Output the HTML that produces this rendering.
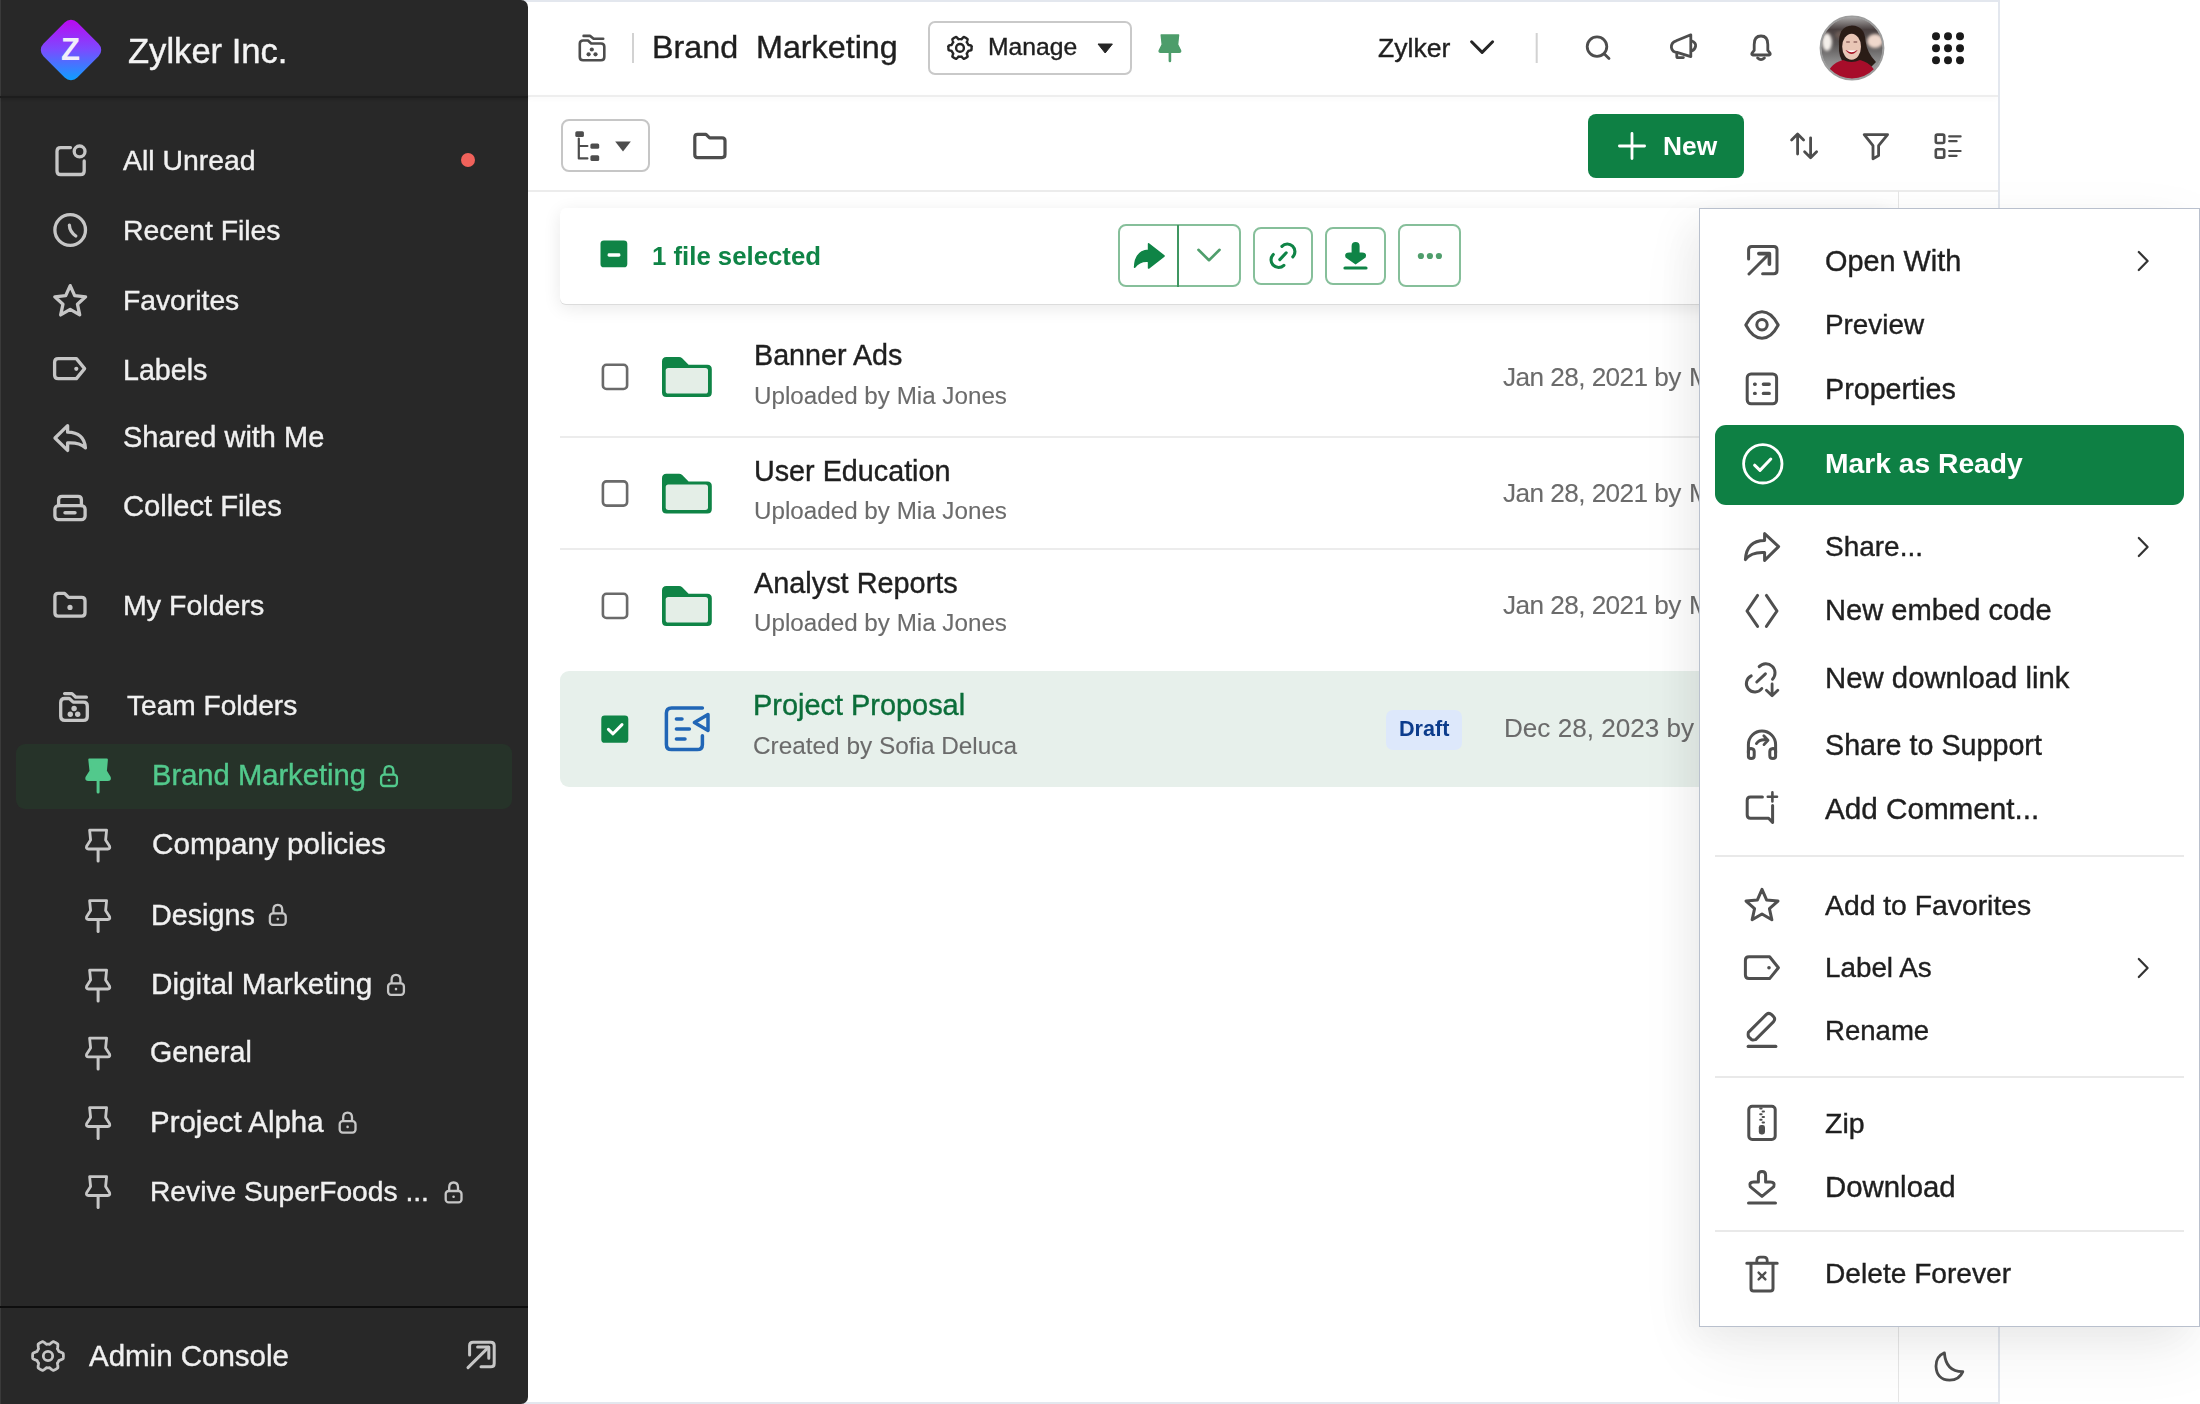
<!DOCTYPE html>
<html><head><meta charset="utf-8"><title>Brand Marketing</title>
<style>
html,body{margin:0;padding:0;width:2200px;height:1404px;overflow:hidden;background:#fff;}
body{position:relative;font-family:"Liberation Sans",sans-serif;}
.t{position:absolute;white-space:pre;line-height:0;will-change:transform;font-family:"Liberation Sans",sans-serif;z-index:6;}
.t.m{z-index:12;}
.abs{position:absolute;}
svg.layer{position:absolute;left:0;top:0;width:2200px;height:1404px;overflow:visible;}
</style></head>
<body>
<!-- outer frame -->
<div class="abs" style="left:0;top:0;width:2000px;height:1404px;background:#e3e7ee;"></div>
<div class="abs" style="left:2px;top:2px;width:1996px;height:1400px;background:#ffffff;"></div>
<!-- sidebar -->
<div class="abs" style="left:0;top:0;width:528px;height:1404px;background:#282828;border-radius:0 7px 7px 0;z-index:2;box-shadow:inset 1px 0 0 #3a3a3a;"></div>
<div class="abs" style="left:0;top:96px;width:528px;height:2px;background:#1d1d1d;z-index:3;box-shadow:0 1px 3px rgba(0,0,0,0.25);"></div>
<div class="abs" style="left:0;top:1305.5px;width:528px;height:2px;background:#0e0e0e;z-index:3;"></div>
<div class="abs" style="left:16px;top:744px;width:496px;height:64.5px;background:#263329;border-radius:9px;z-index:3;"></div>
<div class="abs" style="left:461px;top:153px;width:14px;height:14px;background:#f0625b;border-radius:50%;z-index:4;"></div>
<!-- logo -->
<div class="abs" style="left:46.5px;top:25.5px;width:48px;height:48px;border-radius:9px;transform:rotate(45deg);background:linear-gradient(135deg,#c400f0 0%,#7a4cff 50%,#00aaff 100%);z-index:4;"></div>
<div class="abs" style="left:53px;top:28.5px;width:35px;text-align:center;font:700 31px/42px 'Liberation Sans',sans-serif;color:#f1effa;z-index:5;">Z</div>
<!-- header / toolbar lines -->
<div class="abs" style="left:528px;top:95px;width:1470px;height:2px;background:#eeeeee;box-shadow:0 2px 4px rgba(0,0,0,0.04);z-index:1;"></div>
<div class="abs" style="left:528px;top:189.5px;width:1470px;height:2px;background:#ececec;z-index:1;"></div>
<div class="abs" style="left:1898px;top:191px;width:1px;height:1211px;background:#e6e6e6;z-index:1;"></div>
<!-- manage button -->
<div class="abs" style="left:928px;top:20.5px;width:199.5px;height:50.5px;border:2px solid #c9c9c9;border-radius:7px;z-index:1;"></div>
<!-- tree button -->
<div class="abs" style="left:560.5px;top:119.3px;width:85px;height:49px;border:2px solid #c6c6c6;border-radius:8px;z-index:1;"></div>
<!-- New button -->
<div class="abs" style="left:1588px;top:114px;width:156px;height:64px;background:#0e8044;border-radius:8px;z-index:1;"></div>
<!-- selection card -->
<div class="abs" style="left:560px;top:208px;width:1330px;height:96px;background:#fff;border-radius:6px;box-shadow:0 1px 0 #dcdcdc,0 4px 18px rgba(0,0,0,0.09);z-index:2;"></div>
<div class="abs" style="left:1118.2px;top:224.3px;width:118.4px;height:59px;border:2px solid #86bf9a;border-radius:8px;z-index:3;"></div>
<div class="abs" style="left:1177px;top:225px;width:2px;height:62px;background:#3f9661;z-index:3;"></div>
<div class="abs" style="left:1253.3px;top:226.5px;width:55.3px;height:54.9px;border:2px solid #86bf9a;border-radius:8px;z-index:3;"></div>
<div class="abs" style="left:1325.4px;top:226.5px;width:56.3px;height:54.9px;border:2px solid #86bf9a;border-radius:8px;z-index:3;"></div>
<div class="abs" style="left:1398.3px;top:224.3px;width:59.2px;height:59px;border:2px solid #86bf9a;border-radius:8px;z-index:3;"></div>
<!-- rows -->
<div class="abs" style="left:560px;top:436px;width:1340px;height:2px;background:#ececec;z-index:1;"></div>
<div class="abs" style="left:560px;top:548px;width:1340px;height:2px;background:#ececec;z-index:1;"></div>
<div class="abs" style="left:560px;top:671px;width:1340px;height:116px;background:#e7f0eb;border-radius:9px;z-index:1;"></div>
<div class="abs" style="left:1386.2px;top:710px;width:75.8px;height:39.5px;background:#dde8fb;border-radius:7px;z-index:2;"></div>
<svg style="position:absolute;left:1819px;top:15px;z-index:6" width="66" height="66" viewBox="0 0 66 66">
<defs><clipPath id="av"><circle cx="33" cy="33" r="31"/></clipPath>
<filter id="bl" x="-20%" y="-20%" width="140%" height="140%"><feGaussianBlur stdDeviation="1.6"/></filter>
<filter id="bl2" x="-20%" y="-20%" width="140%" height="140%"><feGaussianBlur stdDeviation="0.6"/></filter>
<linearGradient id="avbg" x1="0" y1="0" x2="0" y2="1"><stop offset="0" stop-color="#b8b8b8"/><stop offset="0.22" stop-color="#4a4040"/><stop offset="0.45" stop-color="#5a5656"/><stop offset="0.7" stop-color="#8c8c8c"/><stop offset="1" stop-color="#b0b0b0"/></linearGradient></defs>
<g clip-path="url(#av)">
<rect width="66" height="66" fill="url(#avbg)"/>
<g filter="url(#bl)">
<ellipse cx="8" cy="27" rx="5" ry="9" fill="#f4efea"/>
<ellipse cx="56" cy="26" rx="8" ry="7" fill="#f0d8cc"/>
<ellipse cx="22" cy="20" rx="6" ry="4" fill="#6a5a54"/>
</g>
<g filter="url(#bl2)">
<path d="M20,30 Q19,11 33,10.5 Q46,11 46.5,26 Q48,38 57,47 L52,52 L40,50 L26,50 Q19,42 20,30 Z" fill="#2a1c18"/>
<ellipse cx="32.6" cy="31.8" rx="9.4" ry="13" fill="#e9c6b6"/>
<path d="M26.5,35 Q32.6,43 38.7,35 Q32.6,37.6 26.5,35 Z" fill="#a81828"/>
<path d="M27.6,35.6 Q32.6,38.8 37.6,35.6 Z" fill="#ffffff"/>
<path d="M27.2,27 H30.8 M34.6,27 H38.2" stroke="#6a3a3a" stroke-width="1.1"/>
<path d="M6,66 Q9,49 24,45 Q32.6,49 41,45 Q56,49 60,66 Z" fill="#a70f2b"/>
</g>
</g>
<circle cx="33" cy="33" r="31.4" fill="none" stroke="#9d9d9d" stroke-width="2"/>
</svg>
<svg class="layer" style="z-index:5" viewBox="0 0 2200 1404"><g fill="none" stroke="#c6c6c6" stroke-width="3.3" stroke-linecap="round" stroke-linejoin="round"><path d="M70.5,147.6 H60.6 Q57,147.6 57,151.2 V170.9 Q57,174.5 60.6,174.5 H80.6 Q84.2,174.5 84.2,170.9 V161"/><circle cx="79.6" cy="151.4" r="5.4"/><circle cx="70.2" cy="230" r="15.3"/><path d="M69.4,225.2 Q69.6,231.5 75.8,236"/><path d="M70.20,285.60 L74.67,295.65 L85.61,296.79 L77.43,304.15 L79.72,314.91 L70.20,309.40 L60.68,314.91 L62.97,304.15 L54.79,296.79 L65.73,295.65 Z"/><path d="M58.2,358.6 H76.4 L84.6,368.6 L76.4,378.6 H58.2 Q54.6,378.6 54.6,375 V362.2 Q54.6,358.6 58.2,358.6 Z"/><circle cx="76.3" cy="368.8" r="2.1" fill="#c6c6c6" stroke="none"/><path d="M67.6,425.6 L55,438 L67.6,450.4 V443 Q79,442.2 85.4,447.8 Q84,432.4 67.6,432.2 Z"/><rect x="54.9" y="505.6" width="30.2" height="14" rx="3.6"/><path d="M58.6,505.6 V499.8 Q58.6,496.4 62,496.4 H78 Q81.4,496.4 81.4,499.8 V505.6"/><path d="M65,512.8 H75" stroke-width="3.4"/><path d="M54.9,596.6 Q54.9,593.4 58.1,593.4 H64.6 L68.6,597.4 H81.7 Q85,597.4 85,600.7 V612.8 Q85,616.1 81.7,616.1 H58.1 Q54.9,616.1 54.9,612.8 Z"/><circle cx="70" cy="607.4" r="2.6" fill="#c6c6c6" stroke="none"/><path d="M60.7,702.6 Q60.7,698.5 64.8,698.5 H69.4 L73.2,702.1 H83.4 Q87.3,702.1 87.3,706 V716.4 Q87.3,720.3 83.4,720.3 H64.8 Q60.7,720.3 60.7,716.2 Z"/><path d="M64.6,693.6 H72 L75.8,697.2 H86.4"/></g><g fill="#c6c6c6"><circle cx="74.1" cy="708.5" r="2.7"/><circle cx="70.3" cy="714.3" r="2.7"/><circle cx="77.7" cy="714.3" r="2.7"/></g><path d="M89.4,759.7 H106.8 L105.8,771.0 L109.6,777.3 Q110.4,780.0 107.8,780.0 H88.4 Q85.8,780.0 86.6,777.3 L90.6,771.0 Z" fill="#52c98c" stroke="#52c98c" stroke-width="2.2" stroke-linejoin="round"/><path d="M98.1,780.5 V792.0" stroke="#52c98c" stroke-width="3" stroke-linecap="round"/><path d="M89.6,830.2 H106.6 L105.6,840.0 L109.6,846.3 Q110.4,849.0 107.8,849.0 H88.4 Q85.8,849.0 86.6,846.3 L90.6,840.0 Z" fill="none" stroke="#c6c6c6" stroke-width="2.8" stroke-linejoin="round"/><path d="M98.1,849.5 V861.0" stroke="#c6c6c6" stroke-width="3" stroke-linecap="round"/><path d="M89.6,900.7 H106.6 L105.6,910.5 L109.6,916.8 Q110.4,919.5 107.8,919.5 H88.4 Q85.8,919.5 86.6,916.8 L90.6,910.5 Z" fill="none" stroke="#c6c6c6" stroke-width="2.8" stroke-linejoin="round"/><path d="M98.1,920 V931.5" stroke="#c6c6c6" stroke-width="3" stroke-linecap="round"/><path d="M89.6,970.2 H106.6 L105.6,980.0 L109.6,986.3 Q110.4,989.0 107.8,989.0 H88.4 Q85.8,989.0 86.6,986.3 L90.6,980.0 Z" fill="none" stroke="#c6c6c6" stroke-width="2.8" stroke-linejoin="round"/><path d="M98.1,989.5 V1001.0" stroke="#c6c6c6" stroke-width="3" stroke-linecap="round"/><path d="M89.6,1038.1000000000001 H106.6 L105.6,1047.9 L109.6,1054.2 Q110.4,1056.9 107.8,1056.9 H88.4 Q85.8,1056.9 86.6,1054.2 L90.6,1047.9 Z" fill="none" stroke="#c6c6c6" stroke-width="2.8" stroke-linejoin="round"/><path d="M98.1,1057.4 V1068.9" stroke="#c6c6c6" stroke-width="3" stroke-linecap="round"/><path d="M89.6,1107.7 H106.6 L105.6,1117.5 L109.6,1123.8 Q110.4,1126.5 107.8,1126.5 H88.4 Q85.8,1126.5 86.6,1123.8 L90.6,1117.5 Z" fill="none" stroke="#c6c6c6" stroke-width="2.8" stroke-linejoin="round"/><path d="M98.1,1127 V1138.5" stroke="#c6c6c6" stroke-width="3" stroke-linecap="round"/><path d="M89.6,1176.7 H106.6 L105.6,1186.5 L109.6,1192.8 Q110.4,1195.5 107.8,1195.5 H88.4 Q85.8,1195.5 86.6,1192.8 L90.6,1186.5 Z" fill="none" stroke="#c6c6c6" stroke-width="2.8" stroke-linejoin="round"/><path d="M98.1,1196 V1207.5" stroke="#c6c6c6" stroke-width="3" stroke-linecap="round"/><g fill="none" stroke="#52c98c" color="#52c98c" stroke-width="2.3"><rect x="381.1" y="774.6" width="15.8" height="11.4" rx="3"/><path d="M384.6,774.6 V771 Q384.6,766.1 389,766.1 Q393.4,766.1 393.4,771 V774.6"/><circle cx="389" cy="780.3" r="1.3" fill="currentColor" stroke="none"/></g><g fill="none" stroke="#c6c6c6" color="#c6c6c6" stroke-width="2.3"><rect x="269.90000000000003" y="913.4" width="15.8" height="11.4" rx="3"/><path d="M273.40000000000003,913.4 V909.8 Q273.40000000000003,904.9 277.8,904.9 Q282.2,904.9 282.2,909.8 V913.4"/><circle cx="277.8" cy="919.0999999999999" r="1.3" fill="currentColor" stroke="none"/></g><g fill="none" stroke="#c6c6c6" color="#c6c6c6" stroke-width="2.3"><rect x="388.1" y="983.4" width="15.8" height="11.4" rx="3"/><path d="M391.6,983.4 V979.8 Q391.6,974.9 396,974.9 Q400.4,974.9 400.4,979.8 V983.4"/><circle cx="396" cy="989.0999999999999" r="1.3" fill="currentColor" stroke="none"/></g><g fill="none" stroke="#c6c6c6" color="#c6c6c6" stroke-width="2.3"><rect x="339.70000000000005" y="1121.1999999999998" width="15.8" height="11.4" rx="3"/><path d="M343.20000000000005,1121.1999999999998 V1117.6 Q343.20000000000005,1112.6999999999998 347.6,1112.6999999999998 Q352.0,1112.6999999999998 352.0,1117.6 V1121.1999999999998"/><circle cx="347.6" cy="1126.8999999999999" r="1.3" fill="currentColor" stroke="none"/></g><g fill="none" stroke="#c6c6c6" color="#c6c6c6" stroke-width="2.3"><rect x="445.70000000000005" y="1191.0" width="15.8" height="11.4" rx="3"/><path d="M449.20000000000005,1191.0 V1187.4 Q449.20000000000005,1182.5 453.6,1182.5 Q458.0,1182.5 458.0,1187.4 V1191.0"/><circle cx="453.6" cy="1196.7" r="1.3" fill="currentColor" stroke="none"/></g><path d="M63.40,1356.00 L63.40,1356.24 L63.39,1356.48 L63.38,1356.73 L63.37,1356.97 L63.35,1357.21 L63.33,1357.45 L63.31,1357.69 L63.28,1357.93 L63.25,1358.17 L63.21,1358.41 L63.11,1358.64 L62.83,1358.83 L62.54,1359.01 L62.23,1359.18 L61.92,1359.34 L61.61,1359.49 L61.29,1359.64 L60.97,1359.77 L60.66,1359.89 L60.34,1360.01 L60.04,1360.12 L59.74,1360.23 L59.46,1360.33 L59.19,1360.43 L58.93,1360.53 L58.83,1360.69 L58.75,1360.86 L58.68,1361.02 L58.60,1361.19 L58.51,1361.36 L58.43,1361.52 L58.34,1361.68 L58.25,1361.85 L58.16,1362.01 L58.06,1362.17 L57.96,1362.32 L57.86,1362.48 L57.76,1362.63 L57.65,1362.79 L57.55,1362.94 L57.44,1363.08 L57.40,1363.29 L57.45,1363.57 L57.50,1363.86 L57.55,1364.16 L57.61,1364.47 L57.66,1364.79 L57.72,1365.13 L57.77,1365.46 L57.81,1365.81 L57.84,1366.16 L57.86,1366.50 L57.88,1366.85 L57.87,1367.20 L57.86,1367.54 L57.82,1367.87 L57.63,1368.02 L57.44,1368.17 L57.25,1368.32 L57.05,1368.46 L56.86,1368.60 L56.66,1368.74 L56.45,1368.87 L56.25,1369.00 L56.05,1369.13 L55.84,1369.26 L55.63,1369.38 L55.42,1369.50 L55.21,1369.61 L54.99,1369.72 L54.78,1369.83 L54.56,1369.93 L54.34,1370.04 L54.12,1370.13 L53.89,1370.23 L53.67,1370.32 L53.44,1370.41 L53.17,1370.36 L52.86,1370.20 L52.56,1370.04 L52.26,1369.86 L51.97,1369.67 L51.68,1369.47 L51.40,1369.26 L51.13,1369.05 L50.87,1368.84 L50.61,1368.63 L50.37,1368.42 L50.13,1368.22 L49.90,1368.03 L49.69,1367.85 L49.48,1367.71 L49.29,1367.73 L49.11,1367.75 L48.93,1367.76 L48.74,1367.78 L48.56,1367.79 L48.37,1367.79 L48.19,1367.80 L48.00,1367.80 L47.81,1367.80 L47.63,1367.79 L47.44,1367.79 L47.26,1367.78 L47.07,1367.76 L46.89,1367.75 L46.71,1367.73 L46.52,1367.71 L46.31,1367.85 L46.10,1368.03 L45.87,1368.22 L45.63,1368.42 L45.39,1368.63 L45.13,1368.84 L44.87,1369.05 L44.60,1369.26 L44.32,1369.47 L44.03,1369.67 L43.74,1369.86 L43.44,1370.04 L43.14,1370.20 L42.83,1370.36 L42.56,1370.41 L42.33,1370.32 L42.11,1370.23 L41.88,1370.13 L41.66,1370.04 L41.44,1369.93 L41.22,1369.83 L41.01,1369.72 L40.79,1369.61 L40.58,1369.50 L40.37,1369.38 L40.16,1369.26 L39.95,1369.13 L39.75,1369.00 L39.55,1368.87 L39.34,1368.74 L39.14,1368.60 L38.95,1368.46 L38.75,1368.32 L38.56,1368.17 L38.37,1368.02 L38.18,1367.87 L38.14,1367.54 L38.13,1367.20 L38.12,1366.85 L38.14,1366.50 L38.16,1366.16 L38.19,1365.81 L38.23,1365.46 L38.28,1365.13 L38.34,1364.79 L38.39,1364.47 L38.45,1364.16 L38.50,1363.86 L38.55,1363.57 L38.60,1363.29 L38.56,1363.08 L38.45,1362.94 L38.35,1362.79 L38.24,1362.63 L38.14,1362.48 L38.04,1362.32 L37.94,1362.17 L37.84,1362.01 L37.75,1361.85 L37.66,1361.68 L37.57,1361.52 L37.49,1361.36 L37.40,1361.19 L37.32,1361.02 L37.25,1360.86 L37.17,1360.69 L37.07,1360.53 L36.81,1360.43 L36.54,1360.33 L36.26,1360.23 L35.96,1360.12 L35.66,1360.01 L35.34,1359.89 L35.03,1359.77 L34.71,1359.64 L34.39,1359.49 L34.08,1359.34 L33.77,1359.18 L33.46,1359.01 L33.17,1358.83 L32.89,1358.64 L32.79,1358.41 L32.75,1358.17 L32.72,1357.93 L32.69,1357.69 L32.67,1357.45 L32.65,1357.21 L32.63,1356.97 L32.62,1356.73 L32.61,1356.48 L32.60,1356.24 L32.60,1356.00 L32.60,1355.76 L32.61,1355.52 L32.62,1355.27 L32.63,1355.03 L32.65,1354.79 L32.67,1354.55 L32.69,1354.31 L32.72,1354.07 L32.75,1353.83 L32.79,1353.59 L32.89,1353.36 L33.17,1353.17 L33.46,1352.99 L33.77,1352.82 L34.08,1352.66 L34.39,1352.51 L34.71,1352.36 L35.03,1352.23 L35.34,1352.11 L35.66,1351.99 L35.96,1351.88 L36.26,1351.77 L36.54,1351.67 L36.81,1351.57 L37.07,1351.47 L37.17,1351.31 L37.25,1351.14 L37.32,1350.98 L37.40,1350.81 L37.49,1350.64 L37.57,1350.48 L37.66,1350.32 L37.75,1350.15 L37.84,1349.99 L37.94,1349.83 L38.04,1349.68 L38.14,1349.52 L38.24,1349.37 L38.35,1349.21 L38.45,1349.06 L38.56,1348.92 L38.60,1348.71 L38.55,1348.43 L38.50,1348.14 L38.45,1347.84 L38.39,1347.53 L38.34,1347.21 L38.28,1346.87 L38.23,1346.54 L38.19,1346.19 L38.16,1345.84 L38.14,1345.50 L38.12,1345.15 L38.13,1344.80 L38.14,1344.46 L38.18,1344.13 L38.37,1343.98 L38.56,1343.83 L38.75,1343.68 L38.95,1343.54 L39.14,1343.40 L39.34,1343.26 L39.55,1343.13 L39.75,1343.00 L39.95,1342.87 L40.16,1342.74 L40.37,1342.62 L40.58,1342.50 L40.79,1342.39 L41.01,1342.28 L41.22,1342.17 L41.44,1342.07 L41.66,1341.96 L41.88,1341.87 L42.11,1341.77 L42.33,1341.68 L42.56,1341.59 L42.83,1341.64 L43.14,1341.80 L43.44,1341.96 L43.74,1342.14 L44.03,1342.33 L44.32,1342.53 L44.60,1342.74 L44.87,1342.95 L45.13,1343.16 L45.39,1343.37 L45.63,1343.58 L45.87,1343.78 L46.10,1343.97 L46.31,1344.15 L46.52,1344.29 L46.71,1344.27 L46.89,1344.25 L47.07,1344.24 L47.26,1344.22 L47.44,1344.21 L47.63,1344.21 L47.81,1344.20 L48.00,1344.20 L48.19,1344.20 L48.37,1344.21 L48.56,1344.21 L48.74,1344.22 L48.93,1344.24 L49.11,1344.25 L49.29,1344.27 L49.48,1344.29 L49.69,1344.15 L49.90,1343.97 L50.13,1343.78 L50.37,1343.58 L50.61,1343.37 L50.87,1343.16 L51.13,1342.95 L51.40,1342.74 L51.68,1342.53 L51.97,1342.33 L52.26,1342.14 L52.56,1341.96 L52.86,1341.80 L53.17,1341.64 L53.44,1341.59 L53.67,1341.68 L53.89,1341.77 L54.12,1341.87 L54.34,1341.96 L54.56,1342.07 L54.78,1342.17 L54.99,1342.28 L55.21,1342.39 L55.42,1342.50 L55.63,1342.62 L55.84,1342.74 L56.05,1342.87 L56.25,1343.00 L56.45,1343.13 L56.66,1343.26 L56.86,1343.40 L57.05,1343.54 L57.25,1343.68 L57.44,1343.83 L57.63,1343.98 L57.82,1344.13 L57.86,1344.46 L57.87,1344.80 L57.88,1345.15 L57.86,1345.50 L57.84,1345.84 L57.81,1346.19 L57.77,1346.54 L57.72,1346.87 L57.66,1347.21 L57.61,1347.53 L57.55,1347.84 L57.50,1348.14 L57.45,1348.43 L57.40,1348.71 L57.44,1348.92 L57.55,1349.06 L57.65,1349.21 L57.76,1349.37 L57.86,1349.52 L57.96,1349.68 L58.06,1349.83 L58.16,1349.99 L58.25,1350.15 L58.34,1350.32 L58.43,1350.48 L58.51,1350.64 L58.60,1350.81 L58.68,1350.98 L58.75,1351.14 L58.83,1351.31 L58.93,1351.47 L59.19,1351.57 L59.46,1351.67 L59.74,1351.77 L60.04,1351.88 L60.34,1351.99 L60.66,1352.11 L60.97,1352.23 L61.29,1352.36 L61.61,1352.51 L61.92,1352.66 L62.23,1352.82 L62.54,1352.99 L62.83,1353.17 L63.11,1353.36 L63.21,1353.59 L63.25,1353.83 L63.28,1354.07 L63.31,1354.31 L63.33,1354.55 L63.35,1354.79 L63.37,1355.03 L63.38,1355.27 L63.39,1355.52 L63.40,1355.76 Z" fill="none" stroke="#c6c6c6" stroke-width="2.8" stroke-linejoin="round"/><circle cx="48" cy="1356" r="4.7" fill="none" stroke="#c6c6c6" stroke-width="2.8"/><g fill="none" stroke="#c6c6c6" stroke-width="3" stroke-linecap="round" stroke-linejoin="round"><path d="M469.6,1355 V1345.6 Q469.6,1342.2 473,1342.2 H490.8 Q494.2,1342.2 494.2,1345.6 V1363.4 Q494.2,1366.8 490.8,1366.8 H481"/><path d="M468,1367.6 L488.4,1347.4"/><path d="M477.6,1347 H488.8 V1358.2"/></g><g fill="none" stroke="#4d4d4d" stroke-width="2.6" stroke-linecap="round" stroke-linejoin="round"><path d="M579.8,43.8 Q579.8,40.5 583.1,40.5 H588 L591.2,43.5 H601 Q604.3,43.5 604.3,46.8 V57 Q604.3,60.3 601,60.3 H583.1 Q579.8,60.3 579.8,57 Z"/><path d="M583.6,35.9 H590.2 L593.6,38.8 H603.2"/></g><g fill="#4d4d4d"><circle cx="591.8" cy="49.5" r="2.1"/><circle cx="588.6" cy="54.3" r="2.1"/><circle cx="595.5" cy="54.3" r="2.1"/></g><rect x="632" y="33" width="2" height="30" fill="#d2d2d2"/><path d="M971.60,47.90 L971.60,48.08 L971.59,48.26 L971.59,48.45 L971.58,48.63 L971.56,48.81 L971.55,48.99 L971.53,49.17 L971.51,49.35 L971.48,49.53 L971.46,49.71 L971.43,49.89 L971.39,50.07 L971.24,50.23 L970.91,50.34 L970.57,50.44 L970.22,50.52 L969.87,50.60 L969.53,50.67 L969.18,50.72 L968.85,50.77 L968.52,50.82 L968.28,50.88 L968.23,51.01 L968.18,51.14 L968.13,51.27 L968.08,51.39 L968.02,51.52 L967.96,51.65 L967.90,51.77 L967.84,51.90 L967.78,52.02 L967.71,52.14 L967.64,52.26 L967.57,52.38 L967.50,52.50 L967.43,52.62 L967.36,52.73 L967.28,52.85 L967.20,52.96 L967.12,53.07 L967.04,53.18 L966.95,53.29 L966.87,53.40 L966.78,53.51 L966.70,53.62 L966.83,53.92 L966.95,54.23 L967.08,54.55 L967.20,54.88 L967.31,55.21 L967.42,55.55 L967.51,55.90 L967.59,56.24 L967.66,56.58 L967.53,56.72 L967.39,56.84 L967.25,56.95 L967.11,57.07 L966.96,57.18 L966.82,57.28 L966.67,57.39 L966.52,57.49 L966.37,57.60 L966.22,57.69 L966.06,57.79 L965.90,57.88 L965.75,57.98 L965.59,58.07 L965.43,58.15 L965.27,58.24 L965.10,58.32 L964.94,58.40 L964.77,58.47 L964.61,58.55 L964.44,58.62 L964.27,58.69 L964.10,58.75 L963.93,58.81 L963.76,58.87 L963.52,58.72 L963.26,58.48 L963.00,58.23 L962.76,57.98 L962.52,57.71 L962.29,57.44 L962.07,57.18 L961.87,56.91 L961.67,56.65 L961.51,56.57 L961.38,56.59 L961.24,56.61 L961.10,56.63 L960.97,56.65 L960.83,56.66 L960.69,56.67 L960.55,56.68 L960.41,56.69 L960.28,56.70 L960.14,56.70 L960.00,56.70 L959.86,56.70 L959.72,56.70 L959.59,56.69 L959.45,56.68 L959.31,56.67 L959.17,56.66 L959.03,56.65 L958.90,56.63 L958.76,56.61 L958.62,56.59 L958.49,56.57 L958.33,56.65 L958.13,56.91 L957.93,57.18 L957.71,57.44 L957.48,57.71 L957.24,57.98 L957.00,58.23 L956.74,58.48 L956.48,58.72 L956.24,58.87 L956.07,58.81 L955.90,58.75 L955.73,58.69 L955.56,58.62 L955.39,58.55 L955.23,58.47 L955.06,58.40 L954.90,58.32 L954.73,58.24 L954.57,58.15 L954.41,58.07 L954.25,57.98 L954.10,57.88 L953.94,57.79 L953.78,57.69 L953.63,57.60 L953.48,57.49 L953.33,57.39 L953.18,57.28 L953.04,57.18 L952.89,57.07 L952.75,56.95 L952.61,56.84 L952.47,56.72 L952.34,56.58 L952.41,56.24 L952.49,55.90 L952.58,55.55 L952.69,55.21 L952.80,54.88 L952.92,54.55 L953.05,54.23 L953.17,53.92 L953.30,53.62 L953.22,53.51 L953.13,53.40 L953.05,53.29 L952.96,53.18 L952.88,53.07 L952.80,52.96 L952.72,52.85 L952.64,52.73 L952.57,52.62 L952.50,52.50 L952.43,52.38 L952.36,52.26 L952.29,52.14 L952.22,52.02 L952.16,51.90 L952.10,51.77 L952.04,51.65 L951.98,51.52 L951.92,51.39 L951.87,51.27 L951.82,51.14 L951.77,51.01 L951.72,50.88 L951.48,50.82 L951.15,50.77 L950.82,50.72 L950.47,50.67 L950.13,50.60 L949.78,50.52 L949.43,50.44 L949.09,50.34 L948.76,50.23 L948.61,50.07 L948.57,49.89 L948.54,49.71 L948.52,49.53 L948.49,49.35 L948.47,49.17 L948.45,48.99 L948.44,48.81 L948.42,48.63 L948.41,48.45 L948.41,48.26 L948.40,48.08 L948.40,47.90 L948.40,47.72 L948.41,47.54 L948.41,47.35 L948.42,47.17 L948.44,46.99 L948.45,46.81 L948.47,46.63 L948.49,46.45 L948.52,46.27 L948.54,46.09 L948.57,45.91 L948.61,45.73 L948.76,45.57 L949.09,45.46 L949.43,45.36 L949.78,45.28 L950.13,45.20 L950.47,45.13 L950.82,45.08 L951.15,45.03 L951.48,44.98 L951.72,44.92 L951.77,44.79 L951.82,44.66 L951.87,44.53 L951.92,44.41 L951.98,44.28 L952.04,44.15 L952.10,44.03 L952.16,43.90 L952.22,43.78 L952.29,43.66 L952.36,43.54 L952.43,43.42 L952.50,43.30 L952.57,43.18 L952.64,43.07 L952.72,42.95 L952.80,42.84 L952.88,42.73 L952.96,42.62 L953.05,42.51 L953.13,42.40 L953.22,42.29 L953.30,42.18 L953.17,41.88 L953.05,41.57 L952.92,41.25 L952.80,40.92 L952.69,40.59 L952.58,40.25 L952.49,39.90 L952.41,39.56 L952.34,39.22 L952.47,39.08 L952.61,38.96 L952.75,38.85 L952.89,38.73 L953.04,38.62 L953.18,38.52 L953.33,38.41 L953.48,38.31 L953.63,38.20 L953.78,38.11 L953.94,38.01 L954.10,37.92 L954.25,37.82 L954.41,37.73 L954.57,37.65 L954.73,37.56 L954.90,37.48 L955.06,37.40 L955.23,37.33 L955.39,37.25 L955.56,37.18 L955.73,37.11 L955.90,37.05 L956.07,36.99 L956.24,36.93 L956.48,37.08 L956.74,37.32 L957.00,37.57 L957.24,37.82 L957.48,38.09 L957.71,38.36 L957.93,38.62 L958.13,38.89 L958.33,39.15 L958.49,39.23 L958.62,39.21 L958.76,39.19 L958.90,39.17 L959.03,39.15 L959.17,39.14 L959.31,39.13 L959.45,39.12 L959.59,39.11 L959.72,39.10 L959.86,39.10 L960.00,39.10 L960.14,39.10 L960.28,39.10 L960.41,39.11 L960.55,39.12 L960.69,39.13 L960.83,39.14 L960.97,39.15 L961.10,39.17 L961.24,39.19 L961.38,39.21 L961.51,39.23 L961.67,39.15 L961.87,38.89 L962.07,38.62 L962.29,38.36 L962.52,38.09 L962.76,37.82 L963.00,37.57 L963.26,37.32 L963.52,37.08 L963.76,36.93 L963.93,36.99 L964.10,37.05 L964.27,37.11 L964.44,37.18 L964.61,37.25 L964.77,37.33 L964.94,37.40 L965.10,37.48 L965.27,37.56 L965.43,37.65 L965.59,37.73 L965.75,37.82 L965.90,37.92 L966.06,38.01 L966.22,38.11 L966.37,38.20 L966.52,38.31 L966.67,38.41 L966.82,38.52 L966.96,38.62 L967.11,38.73 L967.25,38.85 L967.39,38.96 L967.53,39.08 L967.66,39.22 L967.59,39.56 L967.51,39.90 L967.42,40.25 L967.31,40.59 L967.20,40.92 L967.08,41.25 L966.95,41.57 L966.83,41.88 L966.70,42.18 L966.78,42.29 L966.87,42.40 L966.95,42.51 L967.04,42.62 L967.12,42.73 L967.20,42.84 L967.28,42.95 L967.36,43.07 L967.43,43.18 L967.50,43.30 L967.57,43.42 L967.64,43.54 L967.71,43.66 L967.78,43.78 L967.84,43.90 L967.90,44.03 L967.96,44.15 L968.02,44.28 L968.08,44.41 L968.13,44.53 L968.18,44.66 L968.23,44.79 L968.28,44.92 L968.52,44.98 L968.85,45.03 L969.18,45.08 L969.53,45.13 L969.87,45.20 L970.22,45.28 L970.57,45.36 L970.91,45.46 L971.24,45.57 L971.39,45.73 L971.43,45.91 L971.46,46.09 L971.48,46.27 L971.51,46.45 L971.53,46.63 L971.55,46.81 L971.56,46.99 L971.58,47.17 L971.59,47.35 L971.59,47.54 L971.60,47.72 Z" fill="none" stroke="#262626" stroke-width="2.4" stroke-linejoin="round"/><circle cx="960" cy="47.9" r="3.9" fill="none" stroke="#262626" stroke-width="2.4"/><path d="M1098,44 H1112.4 L1105.2,53 Z" fill="#262626" stroke="#262626" stroke-width="1" stroke-linejoin="round"/><path d="M1161.2,35 H1178.6 L1177.6,44.6 L1180.6,50.6 Q1181,52.2 1179.4,52.2 H1160.4 Q1158.8,52.2 1159.2,50.6 L1162.2,44.6 Z" fill="#4d9d6b" stroke="#4d9d6b" stroke-width="1.4" stroke-linejoin="round"/><path d="M1169.9,52 V61" stroke="#4d9d6b" stroke-width="2.6" stroke-linecap="round"/><path d="M1471.6,41.8 L1482.1,52.4 L1492.6,41.8" fill="none" stroke="#262626" stroke-width="3" stroke-linecap="round" stroke-linejoin="round"/><rect x="1535.7" y="33" width="2" height="30" fill="#d2d2d2"/><g fill="none" stroke="#4d4d4d" stroke-width="2.8" stroke-linecap="round" stroke-linejoin="round"><circle cx="1597" cy="46.6" r="9.8"/><path d="M1604.4,54 L1609,58.6"/><path d="M1690.8,34.8 L1676.2,40.8 Q1671,42.4 1671.4,47.6 Q1672.2,52.4 1677,52.4 L1690.8,56.6 Z"/><path d="M1691.4,40.8 Q1696,42.6 1695.6,46 Q1695.2,49.6 1691.4,51"/><path d="M1676.8,52.6 V56.4 Q1676.8,57.6 1678,57.6 H1683.4"/><path d="M1752.6,55 Q1751,54.6 1752.4,52.6 L1754.2,50.4 V44.4 Q1754.2,36 1761,36 Q1767.8,36 1767.8,44.4 V50.4 L1769.6,52.6 Q1771,54.6 1769.4,55 Z"/><path d="M1757.6,58 Q1761,61.2 1764.4,58"/></g><circle cx="1936" cy="36.2" r="4" fill="#1a1a1a"/><circle cx="1948" cy="36.2" r="4" fill="#1a1a1a"/><circle cx="1960" cy="36.2" r="4" fill="#1a1a1a"/><circle cx="1936" cy="48.2" r="4" fill="#1a1a1a"/><circle cx="1948" cy="48.2" r="4" fill="#1a1a1a"/><circle cx="1960" cy="48.2" r="4" fill="#1a1a1a"/><circle cx="1936" cy="60.2" r="4" fill="#1a1a1a"/><circle cx="1948" cy="60.2" r="4" fill="#1a1a1a"/><circle cx="1960" cy="60.2" r="4" fill="#1a1a1a"/><g fill="#4d4d4d"><rect x="575.3" y="131.2" width="8.6" height="5.8" rx="1.6"/><rect x="590.4" y="143.4" width="8.8" height="5.4" rx="1.6"/><rect x="590.4" y="155.2" width="8.8" height="5.8" rx="1.6"/><path d="M615.2,141.6 H630.8 L623,151.4 Z"/></g><path d="M578.8,138.6 V158.4 H587.4 M578.8,146 H587.4" fill="none" stroke="#4d4d4d" stroke-width="2.2" stroke-linecap="round" stroke-linejoin="round"/><path d="M694.8,137.2 Q694.8,134.4 697.6,134.4 H706 L709.6,137.8 H722 Q725,137.8 725,140.8 V154.6 Q725,157.6 722,157.6 H697.6 Q694.8,157.6 694.8,154.8 Z" fill="none" stroke="#4d4d4d" stroke-width="3.2" stroke-linejoin="round"/><path d="M1632,133.4 V158.6 M1619.4,146 H1644.6" stroke="#fff" stroke-width="2.8" stroke-linecap="round"/><g fill="none" stroke="#4d4d4d" stroke-width="2.8" stroke-linecap="round" stroke-linejoin="round"><path d="M1797.6,134.2 V154 M1791.6,140 L1797.6,134 L1803.6,140"/></g><g fill="none" stroke="#4d4d4d" stroke-width="2.8" stroke-linecap="round" stroke-linejoin="round"><path d="M1810.6,137.8 V157.6 M1804.6,151.8 L1810.6,157.8 L1816.6,151.8"/><path d="M1864.2,134.6 H1887.6 L1878.6,145.6 V155.6 L1873,158.8 V145.6 Z"/></g><g fill="none" stroke="#4d4d4d" stroke-width="2.6" stroke-linejoin="round" stroke-linecap="round"><rect x="1935.8" y="134.6" width="8.4" height="8.4" rx="1.4"/><rect x="1935.8" y="149.2" width="8.4" height="8.4" rx="1.4"/><path d="M1949.2,136.4 H1960.6 M1949.2,141.2 H1956.6 M1949.2,151 H1960.6 M1949.2,155.8 H1956.6" stroke-width="2.2"/></g><rect x="600.5" y="240.4" width="26.8" height="26.9" rx="3.4" fill="#0f8446"/><rect x="607.6" y="253.3" width="12.8" height="3.4" rx="1.4" fill="#fff"/><path d="M1148.6,243.8 L1164,256 L1148.6,268 V261.4 Q1139.6,260.6 1134.6,267.2 Q1135.4,250.8 1148.6,250.2 Z" fill="#0f8446" stroke="#0f8446" stroke-width="1.6" stroke-linejoin="round"/><path d="M1198.4,249.8 L1209,260.2 L1219.6,249.8" fill="none" stroke="#4f9e6c" stroke-width="2.6" stroke-linecap="round" stroke-linejoin="round"/><g fill="none" stroke="#0f8446" stroke-width="3.1" stroke-linecap="round"><path d="M1273.3,254.5 A6.7,6.7 0 1 0 1283.9,265.3"/><path d="M1281.9,246.3 A6.7,6.7 0 1 1 1292.8,256.8"/><path d="M1279.8,259.6 L1286.2,252.8"/></g><path d="M1355.6,242 Q1351.6,242 1351.6,246 V252.4 H1349.2 Q1343.8,252.4 1345.6,257.6 L1355.6,264.6 L1365.6,257.6 Q1367.4,252.4 1362,252.4 H1359.6 V246 Q1359.6,242 1355.6,242 Z" fill="#0f8446"/><rect x="1343.4" y="266.4" width="24.2" height="3.2" rx="1.6" fill="#0f8446"/><circle cx="1420.9" cy="256" r="3.1" fill="#4f9e6c"/><circle cx="1429.9" cy="256" r="3.1" fill="#4f9e6c"/><circle cx="1438.9" cy="256" r="3.1" fill="#4f9e6c"/><rect x="602.9" y="364.8" width="24.2" height="24.2" rx="3.6" fill="none" stroke="#6a6a6a" stroke-width="2.6"/><path d="M662,361.6 Q662,357.1 666.5,357.1 H679 Q680.8,357.1 682.2,358.3 L688.6,364.8 H707.3 Q711.8,364.8 711.8,369.3 V392.4 Q711.8,396.9 707.3,396.9 H666.5 Q662,396.9 662,392.4 Z" fill="#0f8446"/><rect x="665.7" y="367.9" width="42.3" height="25.6" rx="2.6" fill="#e4eee7"/><rect x="602.9" y="481.4" width="24.2" height="24.2" rx="3.6" fill="none" stroke="#6a6a6a" stroke-width="2.6"/><path d="M662,478.2 Q662,473.7 666.5,473.7 H679 Q680.8,473.7 682.2,474.9 L688.6,481.4 H707.3 Q711.8,481.4 711.8,485.9 V508.99999999999994 Q711.8,513.5 707.3,513.5 H666.5 Q662,513.5 662,508.99999999999994 Z" fill="#0f8446"/><rect x="665.7" y="484.49999999999994" width="42.3" height="25.6" rx="2.6" fill="#e4eee7"/><rect x="602.9" y="593.8" width="24.2" height="24.2" rx="3.6" fill="none" stroke="#6a6a6a" stroke-width="2.6"/><path d="M662,590.6 Q662,586.1 666.5,586.1 H679 Q680.8,586.1 682.2,587.3 L688.6,593.8 H707.3 Q711.8,593.8 711.8,598.3 V621.4 Q711.8,625.9 707.3,625.9 H666.5 Q662,625.9 662,621.4 Z" fill="#0f8446"/><rect x="665.7" y="596.9" width="42.3" height="25.6" rx="2.6" fill="#e4eee7"/><rect x="601.3" y="715.6" width="27" height="27.2" rx="3.4" fill="#0f8446"/><path d="M608.4,729.4 L613,733.8 L622,724.6" fill="none" stroke="#fff" stroke-width="3" stroke-linecap="round" stroke-linejoin="round"/><g fill="none" stroke="#2166b6" stroke-width="3.5" stroke-linecap="round" stroke-linejoin="round"><path d="M702.4,707.9 H671.6 Q666.4,707.9 666.4,713.1 V744.4 Q666.4,749.6 671.6,749.6 H697.2 Q702.4,749.6 702.4,744.4 V735.8"/><path d="M676.4,719 H682 M676.4,729 H689.4 M676.4,738.9 H685"/><path d="M708,714.6 L694.4,722.6 L708,730.4 Z"/></g><path d="M1944.4,1352.8 Q1936,1356.4 1936,1366.2 Q1936.6,1379.6 1949.6,1380.2 Q1959.4,1380 1962.8,1371.6 Q1945.8,1371.8 1944.4,1352.8 Z" fill="none" stroke="#4d4d4d" stroke-width="2.8" stroke-linejoin="round"/></svg>
<div class="t" style="left:127.50px;top:50.52px;font-size:34.58px;color:#f4f4f4;-webkit-text-stroke:0.4px #f4f4f4;">Zylker Inc.</div><div class="t" style="left:122.70px;top:160.27px;font-size:28.38px;color:#f0f0f0;-webkit-text-stroke:0.4px #f0f0f0;">All Unread</div><div class="t" style="left:122.50px;top:230.18px;font-size:28.34px;color:#f0f0f0;-webkit-text-stroke:0.4px #f0f0f0;">Recent Files</div><div class="t" style="left:122.50px;top:299.70px;font-size:28.27px;color:#f0f0f0;-webkit-text-stroke:0.4px #f0f0f0;">Favorites</div><div class="t" style="left:122.50px;top:369.56px;font-size:28.67px;color:#f0f0f0;-webkit-text-stroke:0.4px #f0f0f0;">Labels</div><div class="t" style="left:122.50px;top:437.46px;font-size:28.97px;color:#f0f0f0;-webkit-text-stroke:0.4px #f0f0f0;">Shared with Me</div><div class="t" style="left:123.20px;top:506.40px;font-size:29.16px;color:#f0f0f0;-webkit-text-stroke:0.4px #f0f0f0;">Collect Files</div><div class="t" style="left:122.50px;top:605.10px;font-size:28.56px;color:#f0f0f0;-webkit-text-stroke:0.4px #f0f0f0;">My Folders</div><div class="t" style="left:127.30px;top:706.26px;font-size:28.11px;color:#f0f0f0;-webkit-text-stroke:0.4px #f0f0f0;">Team Folders</div><div class="t" style="left:151.50px;top:775.39px;font-size:29.17px;color:#52c98c;-webkit-text-stroke:0.4px #52c98c;">Brand Marketing</div><div class="t" style="left:151.50px;top:844.23px;font-size:29.65px;color:#f0f0f0;-webkit-text-stroke:0.4px #f0f0f0;">Company policies</div><div class="t" style="left:151.25px;top:915.05px;font-size:28.72px;color:#f0f0f0;-webkit-text-stroke:0.4px #f0f0f0;">Designs</div><div class="t" style="left:151.25px;top:984.21px;font-size:29.71px;color:#f0f0f0;-webkit-text-stroke:0.4px #f0f0f0;">Digital Marketing</div><div class="t" style="left:150.40px;top:1052.49px;font-size:28.61px;color:#f0f0f0;-webkit-text-stroke:0.4px #f0f0f0;">General</div><div class="t" style="left:150.40px;top:1121.79px;font-size:29.48px;color:#f0f0f0;-webkit-text-stroke:0.4px #f0f0f0;">Project Alpha</div><div class="t" style="left:150.40px;top:1191.23px;font-size:28.20px;color:#f0f0f0;-webkit-text-stroke:0.4px #f0f0f0;">Revive SuperFoods ...</div><div class="t" style="left:89.00px;top:1356.38px;font-size:29.49px;color:#f0f0f0;-webkit-text-stroke:0.4px #f0f0f0;">Admin Console</div><div class="t" style="left:651.50px;top:47.12px;font-size:32.28px;color:#1f1f1f;-webkit-text-stroke:0.4px #1f1f1f;">Brand  Marketing</div><div class="t" style="left:988.00px;top:47.45px;font-size:24.68px;color:#1f1f1f;-webkit-text-stroke:0.4px #1f1f1f;">Manage</div><div class="t" style="left:1378.00px;top:47.90px;font-size:26.56px;color:#1f1f1f;-webkit-text-stroke:0.4px #1f1f1f;">Zylker</div><div class="t" style="left:1663.40px;top:146.17px;font-size:26.34px;color:#ffffff;font-weight:700;">New</div><div class="t" style="left:652.30px;top:256.27px;font-size:25.78px;color:#0f8446;font-weight:700;">1 file selected</div><div class="t" style="left:754.00px;top:355.05px;font-size:28.70px;color:#1f1f1f;-webkit-text-stroke:0.4px #1f1f1f;">Banner Ads</div><div class="t" style="left:754.00px;top:395.61px;font-size:24.21px;color:#6b6b6b;-webkit-text-stroke:0.1px #6b6b6b;">Uploaded by Mia Jones</div><div class="t clip" style="left:1502.50px;top:376.92px;font-size:26.20px;color:#6b6b6b;-webkit-text-stroke:0.1px #6b6b6b;letter-spacing:-0.569px;">Jan 28, 2021 by</div><div class="t clip" style="left:1688.50px;top:376.92px;font-size:26.20px;color:#6b6b6b;-webkit-text-stroke:0.1px #6b6b6b;">M</div><div class="t" style="left:754.00px;top:470.64px;font-size:28.74px;color:#1f1f1f;-webkit-text-stroke:0.4px #1f1f1f;">User Education</div><div class="t" style="left:754.00px;top:511.21px;font-size:24.21px;color:#6b6b6b;-webkit-text-stroke:0.1px #6b6b6b;">Uploaded by Mia Jones</div><div class="t clip" style="left:1502.50px;top:493.42px;font-size:26.20px;color:#6b6b6b;-webkit-text-stroke:0.1px #6b6b6b;letter-spacing:-0.569px;">Jan 28, 2021 by</div><div class="t clip" style="left:1688.50px;top:493.42px;font-size:26.20px;color:#6b6b6b;-webkit-text-stroke:0.1px #6b6b6b;">M</div><div class="t" style="left:754.00px;top:582.80px;font-size:28.86px;color:#1f1f1f;-webkit-text-stroke:0.4px #1f1f1f;">Analyst Reports</div><div class="t" style="left:754.00px;top:623.21px;font-size:24.21px;color:#6b6b6b;-webkit-text-stroke:0.1px #6b6b6b;">Uploaded by Mia Jones</div><div class="t clip" style="left:1502.50px;top:605.42px;font-size:26.20px;color:#6b6b6b;-webkit-text-stroke:0.1px #6b6b6b;letter-spacing:-0.569px;">Jan 28, 2021 by</div><div class="t clip" style="left:1688.50px;top:605.42px;font-size:26.20px;color:#6b6b6b;-webkit-text-stroke:0.1px #6b6b6b;">M</div><div class="t" style="left:753.40px;top:705.08px;font-size:28.92px;color:#0c6e3a;-webkit-text-stroke:0.4px #0c6e3a;">Project Proposal</div><div class="t" style="left:753.40px;top:745.66px;font-size:24.36px;color:#6b6b6b;-webkit-text-stroke:0.1px #6b6b6b;">Created by Sofia Deluca</div><div class="t clip" style="left:1503.70px;top:728.06px;font-size:26.10px;color:#6b6b6b;-webkit-text-stroke:0.1px #6b6b6b;">Dec 28, 2023 by</div><div class="t" style="left:1398.60px;top:728.90px;font-size:21.64px;color:#0c3c8c;font-weight:700;">Draft</div>
<!-- menu -->
<div class="abs" style="left:1699px;top:208px;width:499px;height:1117px;background:#fff;border:1px solid #b9c0cd;box-shadow:0 24px 64px rgba(0,0,0,0.06),-14px 12px 40px rgba(0,0,0,0.05);z-index:10;"></div>
<div class="abs" style="left:1715px;top:425px;width:469px;height:80px;background:#0e8044;border-radius:11px;z-index:11;"></div>
<div class="abs" style="left:1715px;top:855px;width:469px;height:2px;background:#e9e9e9;z-index:11;"></div>
<div class="abs" style="left:1715px;top:1076px;width:469px;height:2px;background:#e9e9e9;z-index:11;"></div>
<div class="abs" style="left:1715px;top:1230px;width:469px;height:2px;background:#e9e9e9;z-index:11;"></div>
<svg class="layer" style="z-index:12" viewBox="0 0 2200 1404"><g fill="none" stroke="#4f4f4f" stroke-width="3" stroke-linecap="round" stroke-linejoin="round"><path d="M1748.6,259 V249.6 Q1748.6,246.4 1751.8,246.4 H1773.8 Q1777,246.4 1777,249.6 V270.6 Q1777,273.8 1773.8,273.8 H1762.6"/><path d="M1749,274 L1768,255"/><path d="M1758.8,253.6 H1769.4 V264.2" stroke-width="3.6"/><path d="M1745.8,325 Q1752.6,311.8 1762,311.8 Q1771.4,311.8 1778.2,325 Q1771.4,338.2 1762,338.2 Q1752.6,338.2 1745.8,325 Z"/><circle cx="1762" cy="324.8" r="5.2"/><rect x="1747.2" y="373.9" width="29.4" height="29.8" rx="3.8"/><path d="M1754.6,384.2 H1755.2 M1763.4,384.2 H1769.2 M1754.6,393.4 H1755.2 M1763.4,393.4 H1769.2" stroke-width="3.4"/><path d="M1764.6,533.6 L1778.6,546.6 L1764.6,560.4 V552.6 Q1751.4,551.8 1745.4,559.6 Q1746.4,540.6 1764.6,540.4 Z"/><path d="M1757.6,595.4 L1747,611 L1757.6,626.4 M1766.4,595.4 L1777,611 L1766.4,626.4"/><path d="M1751.2,675.9 A8.5,8.5 0 1 0 1761.8,688.5"/><path d="M1759.2,666.6 A8.6,8.6 0 1 1 1772.5,679.2"/><path d="M1756.8,682 L1765.4,673.8"/><path d="M1772.1,684 V695.2 M1766.4,690.2 L1772.1,695.8 L1777.8,690.2" stroke-width="2.8"/><path d="M1748.4,753 V744.6 A13.6,13.6 0 0 1 1775.6,744.6 V753"/><path d="M1748.4,756.6 V750.8 Q1748.4,748.4 1751,748.4 Q1754.2,748.6 1754.2,751.6 V755.8 Q1754.2,758.6 1751.2,758.6 Q1748.4,758.4 1748.4,756.6 Z"/><path d="M1775.6,756.6 V750.8 Q1775.6,748.4 1773,748.4 Q1769.8,748.6 1769.8,751.6 V755.8 Q1769.8,758.6 1772.8,758.6 Q1775.6,758.4 1775.6,756.6 Z"/><path d="M1756.4,743.6 Q1760.2,738.4 1767.6,740.2 M1763.8,735.8 L1768,740.2 L1764,744.6" stroke-width="2.8"/><path d="M1762.4,797 H1750.4 Q1747.2,797 1747.2,800.2 V815 Q1747.2,818.2 1750.4,818.2 H1768.6 L1772.6,822.4 V805.4"/><path d="M1772.4,792.4 V801.4 M1767.8,796.8 H1777" stroke-width="2.6"/><path d="M1762.00,889.40 L1766.58,899.89 L1777.98,901.01 L1769.42,908.61 L1771.87,919.79 L1762.00,914.00 L1752.13,919.79 L1754.58,908.61 L1746.02,901.01 L1757.42,899.89 Z"/><path d="M1749,956.8 H1769.6 L1778.4,967.8 L1769.6,978.6 H1749 Q1745.4,978.6 1745.4,975 V960.4 Q1745.4,956.8 1749,956.8 Z"/><circle cx="1769" cy="967.8" r="1.8" fill="#4f4f4f" stroke="none"/><path d="M1750.4,1038.2 Q1747.4,1037.4 1748.4,1032.4 L1766.4,1014.4 Q1769,1012.2 1771.6,1014.6 L1773.4,1016.4 Q1775.8,1019 1773.6,1021.6 L1755.6,1039.6 Q1750.8,1040.6 1750.4,1038.2 Z"/><path d="M1748.2,1046.4 H1775.8" stroke-width="3.2"/><rect x="1748.8" y="1106.2" width="26.4" height="33.2" rx="3.4"/><path d="M1760.2,1108.6 H1761.6 M1762.6,1111.4 H1764 M1760.2,1114.2 H1761.6 M1762.6,1117 H1764 M1760.2,1119.8 H1761.6 M1762.6,1122.4 H1764" stroke-width="2"/><rect x="1758.8" y="1125" width="6.2" height="9.4" rx="2.4" fill="#4f4f4f" stroke="none"/><path d="M1762,1171.4 Q1758.4,1171.4 1758.4,1175 V1182 H1753.6 Q1748.6,1182.2 1750.2,1186.6 L1762,1196.4 L1773.8,1186.6 Q1775.4,1182.2 1770.4,1182 H1765.6 V1175 Q1765.6,1171.4 1762,1171.4 Z"/><path d="M1748.6,1203 H1775.4" stroke-width="3.2"/><path d="M1746.8,1263.2 H1777.2 M1751,1263.6 V1288.4 Q1751,1291 1753.6,1291 H1770.4 Q1773,1291 1773,1288.4 V1263.6"/><path d="M1756.8,1262.8 V1260.6 Q1756.8,1257.2 1760.2,1257.2 H1763.8 Q1767.2,1257.2 1767.2,1260.6 V1262.8" stroke-width="2.8"/><path d="M1758.6,1272.6 L1765.4,1279.4 M1765.4,1272.6 L1758.6,1279.4" stroke-width="2.4"/></g><path d="M2138.8,252 L2147.6,261 L2138.8,270" fill="none" stroke="#333" stroke-width="2.2" stroke-linecap="round" stroke-linejoin="round"/><path d="M2138.8,538 L2147.6,547 L2138.8,556" fill="none" stroke="#333" stroke-width="2.2" stroke-linecap="round" stroke-linejoin="round"/><path d="M2138.8,959 L2147.6,968 L2138.8,977" fill="none" stroke="#333" stroke-width="2.2" stroke-linecap="round" stroke-linejoin="round"/><circle cx="1762.8" cy="463.8" r="19.2" fill="none" stroke="#fff" stroke-width="2.8"/><path d="M1754.6,465.2 L1760,470.4 L1770.8,459" fill="none" stroke="#fff" stroke-width="3" stroke-linecap="round" stroke-linejoin="round"/></svg>
<div class="t m" style="left:1824.80px;top:260.70px;font-size:28.87px;color:#1f1f1f;-webkit-text-stroke:0.4px #1f1f1f;">Open With</div><div class="t m" style="left:1824.80px;top:325.24px;font-size:27.87px;color:#1f1f1f;-webkit-text-stroke:0.4px #1f1f1f;">Preview</div><div class="t m" style="left:1824.80px;top:388.56px;font-size:28.70px;color:#1f1f1f;-webkit-text-stroke:0.4px #1f1f1f;">Properties</div><div class="t m" style="left:1824.80px;top:547.20px;font-size:27.98px;color:#1f1f1f;-webkit-text-stroke:0.4px #1f1f1f;">Share...</div><div class="t m" style="left:1824.80px;top:610.31px;font-size:29.13px;color:#1f1f1f;-webkit-text-stroke:0.4px #1f1f1f;">New embed code</div><div class="t m" style="left:1824.80px;top:678.43px;font-size:29.34px;color:#1f1f1f;-webkit-text-stroke:0.4px #1f1f1f;">New download link</div><div class="t m" style="left:1824.80px;top:744.86px;font-size:28.70px;color:#1f1f1f;-webkit-text-stroke:0.4px #1f1f1f;">Share to Support</div><div class="t m" style="left:1824.80px;top:808.72px;font-size:29.67px;color:#1f1f1f;-webkit-text-stroke:0.4px #1f1f1f;">Add Comment...</div><div class="t m" style="left:1824.80px;top:904.89px;font-size:28.32px;color:#1f1f1f;-webkit-text-stroke:0.4px #1f1f1f;">Add to Favorites</div><div class="t m" style="left:1824.80px;top:968.36px;font-size:27.82px;color:#1f1f1f;-webkit-text-stroke:0.4px #1f1f1f;">Label As</div><div class="t m" style="left:1824.80px;top:1031.25px;font-size:27.57px;color:#1f1f1f;-webkit-text-stroke:0.4px #1f1f1f;">Rename</div><div class="t m" style="left:1824.80px;top:1123.32px;font-size:28.51px;color:#1f1f1f;-webkit-text-stroke:0.4px #1f1f1f;">Zip</div><div class="t m" style="left:1824.80px;top:1187.42px;font-size:29.39px;color:#1f1f1f;-webkit-text-stroke:0.4px #1f1f1f;">Download</div><div class="t m" style="left:1824.80px;top:1273.85px;font-size:28.15px;color:#1f1f1f;-webkit-text-stroke:0.4px #1f1f1f;">Delete Forever</div><div class="t m" style="left:1824.50px;top:463.21px;font-size:28.24px;color:#ffffff;font-weight:700;">Mark as Ready</div>
</body></html>
